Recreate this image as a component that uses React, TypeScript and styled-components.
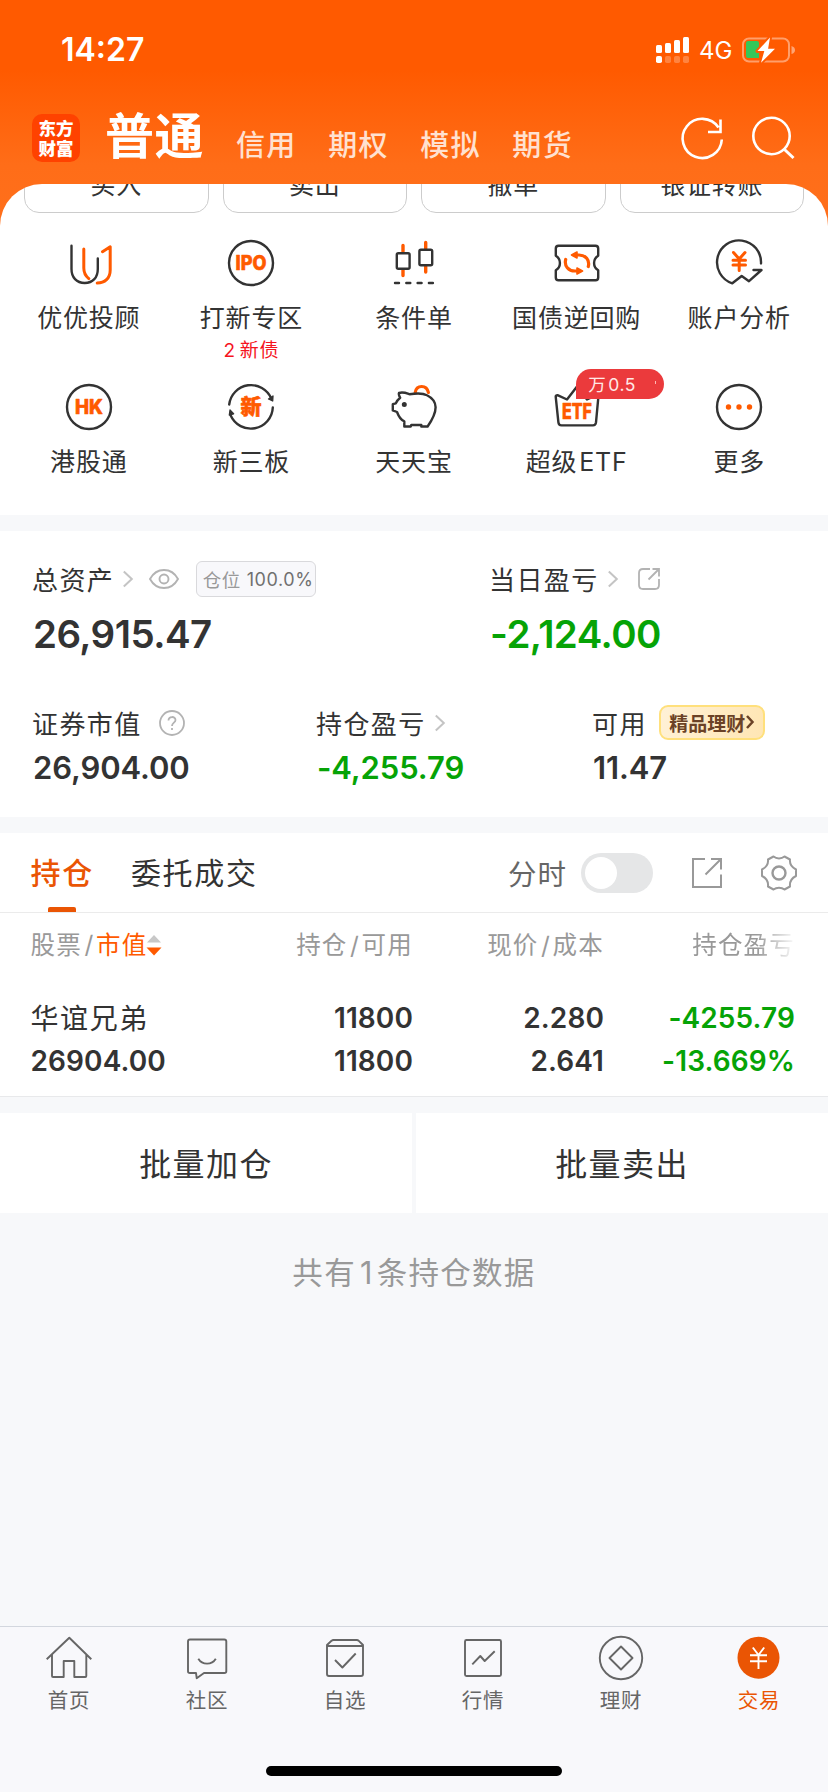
import React from "react";
import styled, { createGlobalStyle, css } from "styled-components";

const ORANGE = "#ff5a00";
const BRAND = "#ea5504";
const INK = "#333333";
const GREEN = "#06a306";
const PAGE = "#f7f8fa";

const GlobalStyle = createGlobalStyle`
  * { box-sizing: border-box; }
  body {
    margin: 0;
    background: ${PAGE};
    font-family: Inter, "Noto Sans CJK SC", sans-serif;
    color: ${INK};
  }
  svg { display: block; overflow: visible; flex: none; }
`;

const Screen = styled.div`
  width: 828px;
  height: 1792px;
  overflow: hidden;
  display: flex;
  flex-direction: column;
  background: linear-gradient(180deg, #ff5a00 0, #ff5a00 70px, #ff6d18 165px, #ff701c 240px, ${PAGE} 240px);
`;

/* ---------- status bar & header ---------- */

const StatusBar = styled.div`
  height: 100px;
  flex: none;
  padding: 0 33px 0 61px;
  display: flex;
  align-items: center;
  justify-content: space-between;
  color: #fff;
`;

const Clock = styled.div`
  font-size: 32px;
  font-weight: 600;
  line-height: 40px;
`;

const StatusIcons = styled.div`
  display: flex;
  align-items: center;
`;

const Network = styled.span`
  width: 53px;
  padding: 2px 0 0 10px;
  font-size: 24px;
  font-weight: 400;
  line-height: 26px;
`;

const Header = styled.div`
  height: 84px;
  flex: none;
  display: flex;
  align-items: flex-start;
  padding: 0 33px 0 32px;
  color: #fff;
`;

const Logo = styled.div`
  width: 48px;
  height: 48px;
  margin-top: 14px;
  padding-top: 4px;
  border-radius: 10px;
  background: #ff4200;
  font-family: "Noto Sans CJK SC", sans-serif;
  font-size: 17.5px;
  font-weight: 800;
  line-height: 20px;
  text-align: center;
`;

const HeaderTabs = styled.div`
  display: flex;
  flex: 1;
  margin-left: 25px;
`;

const HeaderTab = styled.div<{ $active?: boolean }>`
  font-size: 29px;
  font-weight: 500;
  letter-spacing: 1.3px;
  line-height: 40px;
  margin: 26px 31.5px 0 0;
  color: #ffe1d0;
  white-space: nowrap;
  ${(p) =>
    p.$active &&
    css`
      font-size: 49px;
      font-weight: 700;
      letter-spacing: 0.5px;
      line-height: 60px;
      margin: 7px 32px 0 0;
      color: #fff;
    `}
`;

const HeaderActions = styled.div`
  display: flex;
  gap: 24px;
  margin-top: 15px;
`;

/* ---------- sheet ---------- */

const Sheet = styled.div`
  height: 331px;
  flex: none;
  overflow: hidden;
  border-radius: 42px 42px 0 0;
  background: #fff;
`;

const TradeButtons = styled.div`
  display: grid;
  grid-template-columns: repeat(4, 1fr);
  gap: 14px;
  padding: 0 24px;
  margin-top: -30px;
`;

const TradeButton = styled.div`
  height: 59px;
  padding-bottom: 2px;
  border: 1.5px solid #cccccc;
  border-radius: 15px;
  display: flex;
  align-items: center;
  justify-content: center;
  font-size: 25px;
  letter-spacing: 0.8px;
`;

const FunctionGrid = styled.div`
  display: grid;
  grid-template-columns: repeat(5, 1fr);
  grid-auto-rows: 144px;
  padding: 27px 7.5px 0;
`;

const FunctionCell = styled.div`
  position: relative;
  display: flex;
  flex-direction: column;
  align-items: center;
`;

const FunctionLabel = styled.div`
  margin-top: 16px;
  font-size: 25px;
  letter-spacing: 0.8px;
  line-height: 32px;
  white-space: nowrap;
`;

const Latin = styled.span<{ $before?: number; $after?: number }>`
  margin-left: ${(p) => p.$before ?? 0}px;
  margin-right: ${(p) => p.$after ?? 0}px;
`;

const FunctionNote = styled.div`
  margin-top: 5px;
  font-size: 19px;
  letter-spacing: 0.8px;
  line-height: 24px;
  color: #f5141e;
`;

const FeeBadge = styled.div`
  position: absolute;
  left: 81px;
  top: -15px;
  width: 88px;
  height: 30px;
  padding: 0 8px 2px 12px;
  display: flex;
  align-items: center;
  justify-content: space-between;
  border-radius: 15px 15px 15px 0;
  background: #eb3a3c;
  color: #ffe9e6;
  font-size: 17.5px;
  letter-spacing: 0.5px;
  white-space: nowrap;
`;

const FeeDot = styled.i`
  width: 1.5px;
  height: 3px;
  margin-top: -1px;
  background: #ffb9b5;
`;

/* ---------- assets ---------- */

const AssetPanel = styled.section`
  height: 286px;
  flex: none;
  margin-top: 16px;
  padding: 28px 0 0 33px;
  background: #fff;
`;

const AssetRow = styled.div<{ $cols: string; $top?: number }>`
  display: grid;
  grid-template-columns: ${(p) => p.$cols};
  margin-top: ${(p) => p.$top ?? 0}px;
`;

const AssetLabel = styled.div`
  height: 40px;
  display: flex;
  align-items: center;
`;

const Caption = styled.span`
  margin-left: -1px;
  padding-bottom: 2px;
  font-size: 26px;
  letter-spacing: 1.4px;
  white-space: nowrap;
`;

const AssetValue = styled.div<{ $large?: boolean; $down?: boolean }>`
  font-size: ${(p) => (p.$large ? 38.5 : 31)}px;
  letter-spacing: ${(p) => (p.$large ? -0.55 : -0.1)}px;
  font-weight: 600;
  line-height: 40px;
  margin-top: ${(p) => (p.$large ? 15 : 5)}px;
  color: ${(p) => (p.$down ? GREEN : INK)};
`;

const IconSlot = styled.span<{ $left: number }>`
  margin-left: ${(p) => p.$left}px;
`;

const PositionTag = styled.span`
  width: 120px;
  height: 36px;
  margin-left: 17px;
  padding-left: 4px;
  display: flex;
  align-items: center;
  justify-content: center;
  gap: 6px;
  border: 1.3px solid #d9d9dc;
  border-radius: 6px;
  background: #f8f8fb;
  font-size: 18.5px;
  letter-spacing: 0.4px;
  color: #999;
  white-space: nowrap;
  b {
    font-weight: 400;
    font-size: 18px;
    letter-spacing: 0.6px;
    color: #707070;
    padding-top: 1px;
  }
`;

const WealthTag = styled.span`
  width: 106px;
  height: 35px;
  margin: -1px 0 0 12px;
  padding-bottom: 1px;
  display: flex;
  align-items: center;
  justify-content: center;
  gap: 1px;
  border: 2px solid #ffe07c;
  border-radius: 9px;
  background: linear-gradient(100deg, #fff1d6, #ffe6b4);
  color: #6b4226;
  font-size: 19px;
  font-weight: 700;
  white-space: nowrap;
`;

/* ---------- holdings ---------- */

const Holdings = styled.section`
  height: 264px;
  flex: none;
  margin-top: 16px;
  background: #fff;
  border-bottom: 1px solid #e8e9eb;
`;

const HoldingsTabs = styled.div`
  height: 80px;
  display: flex;
  align-items: center;
  padding: 0 31px 0 30.5px;
  border-bottom: 1px solid #ebebeb;
`;

const HoldingsTab = styled.div<{ $active?: boolean }>`
  position: relative;
  height: 79px;
  line-height: 80px;
  margin-right: 37px;
  font-size: 30px;
  letter-spacing: 1.7px;
  font-weight: ${(p) => (p.$active ? 500 : 400)};
  color: ${(p) => (p.$active ? BRAND : INK)};
  ${(p) =>
    p.$active &&
    css`
      &::after {
        content: "";
        position: absolute;
        left: 17.5px;
        bottom: 0;
        width: 28px;
        height: 5px;
        border-radius: 2px 2px 0 0;
        background: ${BRAND};
      }
    `}
`;

const ChartSwitch = styled.div`
  margin-left: auto;
  display: flex;
  align-items: center;
  gap: 14px;
  font-size: 28.5px;
  letter-spacing: 1px;
  color: #666;
`;

const Track = styled.span`
  width: 72px;
  height: 40px;
  padding: 4px;
  border-radius: 20px;
  background: #e5e6e7;
`;

const Knob = styled.span`
  display: block;
  width: 32px;
  height: 32px;
  border-radius: 50%;
  background: #fff;
`;

const TableRow = styled.div<{ $top?: number; $head?: boolean }>`
  height: ${(p) => (p.$head ? 61 : 43)}px;
  margin-top: ${(p) => p.$top ?? 0}px;
  display: grid;
  grid-template-columns: 182.5px 200px 191px 191px;
  align-items: center;
  padding-left: 30.5px;
  font-size: ${(p) => (p.$head ? 24.5 : 28)}px;
  letter-spacing: ${(p) => (p.$head ? 1.2 : 0.1)}px;
  font-weight: ${(p) => (p.$head ? 400 : 600)};
  color: ${(p) => (p.$head ? "#999" : INK)};
  white-space: nowrap;
`;

const Cell = styled.div<{ $down?: boolean }>`
  text-align: right;
  color: ${(p) => (p.$down ? GREEN : "inherit")};
`;

const FadingCell = styled(Cell)`
  mask-image: linear-gradient(90deg, #000 80%, transparent 101%);
`;

const FirstCell = styled.div`
  display: flex;
  align-items: center;
`;

const StockName = styled.div`
  padding-bottom: 2px;
  font-size: 28px;
  font-weight: 400;
  letter-spacing: 1.6px;
`;

const Slash = styled.span`
  padding: 0 1.5px 0 2.5px;
`;

const Sorted = styled.span`
  color: ${ORANGE};
`;

const SortSlot = styled.span`
  margin: 3px 0 0 -1px;
`;

/* ---------- bulk actions ---------- */

const BulkActions = styled.div`
  height: 100px;
  flex: none;
  margin-top: 16px;
  display: grid;
  grid-template-columns: 1fr 1fr;
  gap: 4px;
`;

const BulkButton = styled.div`
  display: flex;
  align-items: center;
  justify-content: center;
  padding-bottom: 3px;
  background: #fff;
  font-size: 32px;
  letter-spacing: 1.4px;
`;

const Summary = styled.div`
  flex: 1;
  padding-top: 40px;
  text-align: center;
  font-size: 30.5px;
  line-height: 40px;
  letter-spacing: 1.3px;
  color: #999;
  background: ${PAGE};
`;

/* ---------- bottom navigation ---------- */

const BottomNav = styled.nav`
  height: 166px;
  flex: none;
  border-top: 1px solid #d3d7de;
  background: #f8f8fb;
  display: flex;
  flex-direction: column;
  align-items: center;
`;

const NavItems = styled.div`
  width: 100%;
  display: grid;
  grid-template-columns: repeat(6, 1fr);
  padding-top: 8px;
  height: 139px;
`;

const NavItem = styled.div<{ $active?: boolean }>`
  display: flex;
  flex-direction: column;
  align-items: center;
  gap: 5px;
  font-size: 20.5px;
  line-height: 30px;
  letter-spacing: 0.8px;
  color: ${(p) => (p.$active ? BRAND : "#666")};
`;

const HomeIndicator = styled.div`
  width: 296px;
  height: 10px;
  border-radius: 5px;
  background: #000;
`;

/* ---------- icons ---------- */

const Glyph = ({ children }: { children: React.ReactNode }) => (
  <svg width="46" height="46" viewBox="0 0 46 46" fill="none" stroke={INK} strokeWidth="2.4" strokeLinecap="round" strokeLinejoin="round">
    {children}
  </svg>
);

const GlyphText = ({ y = 30, size = 20, width, children }: { y?: number; size?: number; width: number; children: string }) => (
  <text
    x="23"
    y={y}
    textAnchor="middle"
    textLength={width}
    lengthAdjust="spacingAndGlyphs"
    fontSize={size}
    fontWeight="800"
    fill={ORANGE}
    stroke={ORANGE}
    strokeWidth="0.6"
  >
    {children}
  </text>
);

const AdvisorIcon = () => (
  <Glyph>
    <path d="M5.500 5.700V29c0 8.500 5 14 13.200 14S31.800 37.500 31.800 29V18.500" />
    <path d="M17.800 9v19c0 5 2 8.200 5 10.600M36.500 11.700l7.700-4.900V30c0 8.500-5.500 13-13 13" stroke={ORANGE} strokeWidth="3" />
  </Glyph>
);

const IpoIcon = () => (
  <Glyph>
    <circle cx="23" cy="23" r="22" />
    <GlyphText width={31}>IPO</GlyphText>
  </Glyph>
);

const CandleIcon = () => (
  <Glyph>
    <path d="M12 5.500v6M12 30v5.500M34.700 2.500v6M34.700 26.500v5.500" stroke={ORANGE} strokeWidth="3.400" />
    <rect x="5.800" y="13.200" width="12.800" height="15.500" rx="1.500" />
    <rect x="28.400" y="9.700" width="12.800" height="15.500" rx="1.500" />
    <path d="M4 43h4M15.300 43h4M26.600 43h4M37.900 43h4" />
  </Glyph>
);

const RepoIcon = () => (
  <Glyph>
    <path d="M4.500 5.700h37q2.700 0 2.700 2.700v7.300c-5.500 3.300-5.500 11.300 0 14.600v7.300q0 2.700-2.700 2.700h-37q-2.700 0-2.700-2.700v-7.300c5.500-3.300 5.500-11.300 0-14.600V8.400q0-2.700 2.700-2.700z" />
    <path d="M20 15h5c6.500 0 11 5 9.300 11.500M26 31h-5c-6.500 0-11-5-9.300-11.500" stroke={ORANGE} strokeWidth="3.200" />
    <path d="M17.500 15l5.500-3v6zM28.500 31l-5.500 3v-6z" fill={ORANGE} stroke={ORANGE} strokeWidth="1.600" />
  </Glyph>
);

const AnalysisIcon = () => (
  <Glyph>
    <path d="M45 23.500A22 22 0 1 0 16.300 43.300L25.700 36l7.300 5.200L45.500 30h-8" />
    <path d="M17.500 12.500l5.700 6.500 5.800-6.500M17 20.300h12.500M17 25h12.500M23.200 19v11.500" stroke={ORANGE} strokeWidth="3" />
  </Glyph>
);

const HkIcon = () => (
  <Glyph>
    <circle cx="23" cy="23" r="22" />
    <GlyphText width={28}>HK</GlyphText>
  </Glyph>
);

const NewBoardIcon = () => (
  <Glyph>
    <path d="M1.200 20.500A22 22 0 0 1 43.300 14.500M44.800 23.500A22 22 0 0 1 2.700 31.500" />
    <path d="M40.500 15l4.200 2 .3-5zM1.300 31l.7-5 3.600 3.800z" fill={INK} strokeWidth="1.300" />
    <GlyphText width={21} size={21}>新</GlyphText>
  </Glyph>
);

const PiggyIcon = () => (
  <Glyph>
    <path d="M24.200 8.500c1.300-8 11.500-8 13.200 0" stroke={ORANGE} strokeWidth="3.200" />
    <path
      fill="#fff"
      d="M8 9c4-1.300 7 0 10.500 1.200C23 9.500 31 8.500 36 11.200c6 3 8.500 7.500 8.600 12 0 7.300-3.800 13.200-8 19.300H30.300V41H20.300l-.6 1.500h-6.400V37.300C10 36 7.500 32 6 28L1.800 26.400v-6.200l3-.8C5.800 17 7 15.500 9.200 13.800 8.500 12.500 7.300 10.500 8 9z"
    />
    <circle cx="13.300" cy="20.500" r="1.500" fill={INK} strokeWidth="2" />
  </Glyph>
);

const EtfIcon = () => (
  <Glyph>
    <path d="M3.500 11.200L13 15.500 23 2.500l10 13 10-4.500q1.700 0 1.400 1.700l-2.400 25.700q-.4 3-3 3H7.500q-2.800 0-3.100-3L1.700 12.700q0-1.500 1.800-1.500z" />
    <GlyphText width={30} size={21} y={34.5}>ETF</GlyphText>
  </Glyph>
);

const MoreIcon = () => (
  <Glyph>
    <circle cx="23" cy="23" r="22" />
    <g fill={ORANGE} stroke="none">
      <circle cx="12.500" cy="23" r="2.700" />
      <circle cx="23" cy="23" r="2.700" />
      <circle cx="33.500" cy="23" r="2.700" />
    </g>
  </Glyph>
);

const Chevron = () => (
  <svg width="10" height="16" viewBox="0 0 10 16" fill="none" stroke="#c4c4c4" strokeWidth="2">
    <path d="M.8.500l8 7.500-8 7.500" />
  </svg>
);

const EyeIcon = () => (
  <svg width="30" height="20" viewBox="0 0 30 20" fill="none" stroke="#b3b3b3" strokeWidth="1.900">
    <path d="M1 10C4 4.500 9 1 15 1s11 3.500 14 9c-3 5.500-8 9-14 9S4 15.500 1 10z" />
    <circle cx="15" cy="10" r="4.500" />
  </svg>
);

const ShareSmall = () => (
  <svg width="22" height="22" viewBox="0 0 22 22" fill="none" stroke="#b3b3b3" strokeWidth="1.800">
    <path d="M12 1H5Q1 1 1 5v12q0 4 4 4h12q4 0 4-4v-6M14.500 1H21v7.500M21 1L10.500 11.500" />
  </svg>
);

const HelpIcon = () => (
  <svg width="26" height="26" viewBox="0 0 26 26" fill="none" stroke="#b3b3b3" strokeWidth="1.800">
    <circle cx="13" cy="13" r="12" />
    <path d="M9.500 10.500c0-4.500 7-4.600 7-.5 0 2.600-3.500 2.800-3.500 6M13 18v2" />
  </svg>
);

const ShareIcon = () => (
  <svg width="30" height="30" viewBox="0 0 30 30" fill="none" stroke="#999" strokeWidth="2">
    <path d="M13 1H1v28h28V16.500M19 1h10v10.500M29 1L13.500 16.500" />
  </svg>
);

const GearIcon = () => (
  <svg width="36" height="36" viewBox="0 0 36 36" fill="none" stroke="#999" strokeWidth="2" strokeLinejoin="round">
    <path d="M12.500 1.500C15.500 4 20.500 4 23.500 1.500L29 4.500C28.500 9 31 12.500 35 14.500v6.500C31 23 28.500 27 29 31.500l-5.500 3c-3-2.500-8-2.500-11 0L7 31.500C7.500 27 5 23 1 21v-6.500C5 12.500 7.500 9 7 4.500z" />
    <circle cx="18" cy="18" r="6.500" strokeWidth="2.400" />
  </svg>
);

const SortIcon = () => (
  <svg width="16" height="22" viewBox="0 0 16 22">
    <path d="M8 1l7 7.500H1z" fill="#c8c8c8" />
    <path d="M8 21.500L.5 13.500h15z" fill={ORANGE} />
  </svg>
);

const SignalIcon = () => (
  <svg width="33" height="26" viewBox="0 0 33 26" fill="#fff">
    <rect x="0" y="8" width="6" height="8" rx="1.500" />
    <rect x="9" y="6" width="6" height="10" rx="1.500" />
    <rect x="18" y="3" width="6" height="13" rx="1.500" />
    <rect x="27" y="0" width="6" height="16" rx="1.500" />
    <rect x="0" y="19" width="6" height="7" rx="1.800" />
    <g opacity=".25">
      <rect x="9" y="19" width="6" height="7" rx="1.800" />
      <rect x="18" y="19" width="6" height="7" rx="1.800" />
      <rect x="27" y="19" width="6" height="7" rx="1.800" />
    </g>
  </svg>
);

const BatteryIcon = () => (
  <svg width="53" height="26" viewBox="0 0 53 26">
    <rect x="1" y="1.500" width="46" height="23" rx="6" fill="none" stroke="#fff" strokeOpacity=".42" strokeWidth="2" />
    <path d="M49.500 9v8q3.500-1 3.500-4t-3.500-4z" fill="#fff" opacity=".45" />
    <path d="M6 4h9q2 0 2 2v15H6q-2 0-2-2V6q0-2 2-2z" fill="#34c759" />
    <path d="M28 .5L15.500 14h6.800L19 25.700 33 11.800h-6.900z" fill="#fff" stroke="#ff5a00" strokeWidth="4" paintOrder="stroke" strokeLinejoin="round" />
  </svg>
);

const RefreshIcon = () => (
  <svg width="46" height="46" viewBox="0 0 46 46" fill="none" stroke="#fff" strokeWidth="2.600">
    <path d="M42.800 24.500A19.600 19.600 0 1 1 39.500 12.500M41.500 4.500v12.500H29" />
  </svg>
);

const SearchIcon = () => (
  <svg width="46" height="46" viewBox="0 0 46 46" fill="none" stroke="#fff" strokeWidth="2.600">
    <circle cx="22.500" cy="21" r="18.200" />
    <path d="M35 34l9.500 9" strokeWidth="3" />
  </svg>
);

const NavGlyph = ({ children }: { children: React.ReactNode }) => (
  <svg width="46" height="46" viewBox="0 0 46 46" fill="none" stroke="#666" strokeWidth="1.900" strokeLinejoin="round">
    {children}
  </svg>
);

const functions = [
  { label: "优优投顾", icon: <AdvisorIcon /> },
  {
    label: "打新专区",
    icon: <IpoIcon />,
    note: (
      <>
        <Latin $after={4}>2</Latin>新债
      </>
    ),
  },
  { label: "条件单", icon: <CandleIcon /> },
  { label: "国债逆回购", icon: <RepoIcon /> },
  { label: "账户分析", icon: <AnalysisIcon /> },
  { label: "港股通", icon: <HkIcon /> },
  { label: "新三板", icon: <NewBoardIcon /> },
  { label: "天天宝", icon: <PiggyIcon /> },
  {
    label: "超级",
    latin: "ETF",
    icon: <EtfIcon />,
    badge: (
      <span>
        万<Latin $before={2}>0.5</Latin>
      </span>
    ),
  },
  { label: "更多", icon: <MoreIcon /> },
];

const navItems = [
  {
    label: "首页",
    icon: <path d="M.7 24.300L23.300 2.700l22 21.600M6 19.500V41q0 1 1 1h10.700V26h10.600v16h11q1 0 1-1V19.500" />,
  },
  {
    label: "社区",
    icon: <path d="M6 4.500h34.300q2 0 2 2v29.700q0 1.800-2 1.800H20l-7.300 5.200L12 38H6q-2 0-2-1.800V6.500q0-2 2-2zM14.300 23.700c4 6.500 13.500 6.500 17.500 0" />,
  },
  {
    label: "自选",
    icon: <path d="M5 11h36v28q0 2-2 2H7q-2 0-2-2V10l4.500-4.200q.8-.8 2-.8h23.300q1.200 0 2 .8L41 10v1M13 25l7.400 7.500L33.700 18.500" />,
  },
  {
    label: "行情",
    icon: (
      <>
        <rect x="5" y="5" width="36" height="36" rx="1.500" />
        <path d="M12.300 29.300l8-8.300 4.400 5 10-9.700" />
      </>
    ),
  },
  {
    label: "理财",
    icon: (
      <>
        <circle cx="23" cy="23" r="21.200" />
        <path d="M23 11.500L34.500 23 23 34.500 11.500 23z" />
      </>
    ),
  },
  {
    label: "交易",
    active: true,
    icon: (
      <>
        <circle cx="22.500" cy="22.700" r="21" fill={BRAND} stroke="none" />
        <path d="M16.800 12.500l5.700 7.500 5.700-7.500M14 20.300h17M14 26.300h17M22.500 20v14" stroke="#fff" />
      </>
    ),
  },
];

export default function App() {
  return (
    <>
      <GlobalStyle />
      <Screen>
        <StatusBar>
          <Clock>14:27</Clock>
          <StatusIcons>
            <SignalIcon />
            <Network>4G</Network>
            <BatteryIcon />
          </StatusIcons>
        </StatusBar>

        <Header>
          <Logo>
            东方
            <br />
            财富
          </Logo>
          <HeaderTabs>
            <HeaderTab $active>普通</HeaderTab>
            <HeaderTab>信用</HeaderTab>
            <HeaderTab>期权</HeaderTab>
            <HeaderTab>模拟</HeaderTab>
            <HeaderTab>期货</HeaderTab>
          </HeaderTabs>
          <HeaderActions>
            <RefreshIcon />
            <SearchIcon />
          </HeaderActions>
        </Header>

        <Sheet>
          <TradeButtons>
            {["买入", "卖出", "撤单", "银证转账"].map((t) => (
              <TradeButton key={t}>{t}</TradeButton>
            ))}
          </TradeButtons>
          <FunctionGrid>
            {functions.map((f) => (
              <FunctionCell key={f.label}>
                {f.icon}
                <FunctionLabel>
                  {f.label}
                  {f.latin && <Latin $before={2}>{f.latin}</Latin>}
                </FunctionLabel>
                {f.note && <FunctionNote>{f.note}</FunctionNote>}
                {f.badge && (
                  <FeeBadge>
                    {f.badge}
                    <FeeDot />
                  </FeeBadge>
                )}
              </FunctionCell>
            ))}
          </FunctionGrid>
        </Sheet>

        <AssetPanel>
          <AssetRow $cols="457px 1fr">
            <div>
              <AssetLabel>
                <Caption>总资产</Caption>
                <IconSlot $left={9}><Chevron /></IconSlot>
                <IconSlot $left={16}><EyeIcon /></IconSlot>
                <PositionTag>
                  仓位<b>100.0%</b>
                </PositionTag>
              </AssetLabel>
              <AssetValue $large>26,915.47</AssetValue>
            </div>
            <div>
              <AssetLabel>
                <Caption>当日盈亏</Caption>
                <IconSlot $left={9}><Chevron /></IconSlot>
                <IconSlot $left={20}><ShareSmall /></IconSlot>
              </AssetLabel>
              <AssetValue $large $down>-2,124.00</AssetValue>
            </div>
          </AssetRow>
          <AssetRow $cols="284px 276px 1fr" $top={49}>
            <div>
              <AssetLabel>
                <Caption>证券市值</Caption>
                <IconSlot $left={17}><HelpIcon /></IconSlot>
              </AssetLabel>
              <AssetValue>26,904.00</AssetValue>
            </div>
            <div>
              <AssetLabel>
                <Caption>持仓盈亏</Caption>
                <IconSlot $left={9}><Chevron /></IconSlot>
              </AssetLabel>
              <AssetValue $down>-4,255.79</AssetValue>
            </div>
            <div>
              <AssetLabel>
                <Caption>可用</Caption>
                <WealthTag>
                  精品理财
                  <svg width="8" height="14" viewBox="0 0 8 14" fill="none" stroke="#6b4226" strokeWidth="2.500">
                    <path d="M1 1l5.500 6L1 13" />
                  </svg>
                </WealthTag>
              </AssetLabel>
              <AssetValue>11.47</AssetValue>
            </div>
          </AssetRow>
        </AssetPanel>

        <Holdings>
          <HoldingsTabs>
            <HoldingsTab $active>持仓</HoldingsTab>
            <HoldingsTab>委托成交</HoldingsTab>
            <ChartSwitch>
              分时
              <Track>
                <Knob />
              </Track>
            </ChartSwitch>
            <IconSlot $left={39}><ShareIcon /></IconSlot>
            <IconSlot $left={39}><GearIcon /></IconSlot>
          </HoldingsTabs>
          <TableRow $head>
            <FirstCell>
              股票<Slash>/</Slash>
              <Sorted>市值</Sorted>
              <SortSlot><SortIcon /></SortSlot>
            </FirstCell>
            <Cell>持仓<Slash>/</Slash>可用</Cell>
            <Cell>现价<Slash>/</Slash>成本</Cell>
            <FadingCell>持仓盈亏</FadingCell>
          </TableRow>
          <TableRow $top={22}>
            <StockName>华谊兄弟</StockName>
            <Cell>11800</Cell>
            <Cell>2.280</Cell>
            <Cell $down>-4255.79</Cell>
          </TableRow>
          <TableRow>
            <div>26904.00</div>
            <Cell>11800</Cell>
            <Cell>2.641</Cell>
            <Cell $down>-13.669%</Cell>
          </TableRow>
        </Holdings>

        <BulkActions>
          <BulkButton>批量加仓</BulkButton>
          <BulkButton>批量卖出</BulkButton>
        </BulkActions>
        <Summary>
          共有<Latin $before={4} $after={3}>1</Latin>条持仓数据
        </Summary>

        <BottomNav>
          <NavItems>
            {navItems.map((n) => (
              <NavItem key={n.label} $active={n.active}>
                <NavGlyph>{n.icon}</NavGlyph>
                {n.label}
              </NavItem>
            ))}
          </NavItems>
          <HomeIndicator />
        </BottomNav>
      </Screen>
    </>
  );
}
